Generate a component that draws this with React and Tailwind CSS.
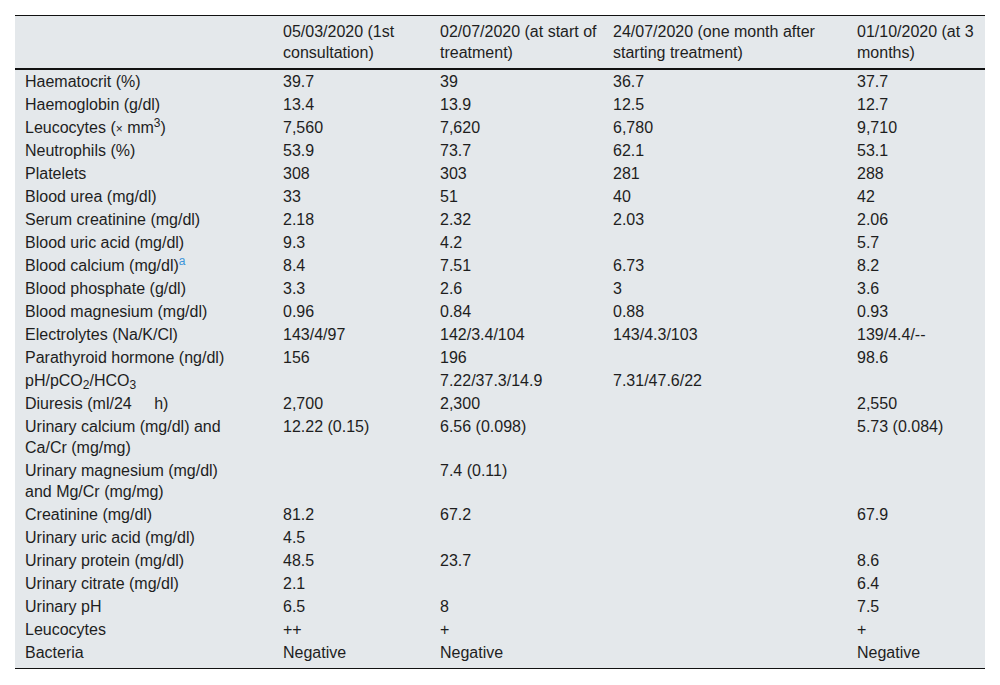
const headers = [
  '',
  '05/03/2020 (1st consultation)',
  '02/07/2020 (at start of treatment)',
  '24/07/2020 (one month after starting treatment)',
  '01/10/2020 (at 3 months)',
]

const rows = [
  ['Haematocrit (%)', '39.7', '39', '36.7', '37.7'],
  ['Haemoglobin (g/dl)', '13.4', '13.9', '12.5', '12.7'],
  [
    <>
      Leucocytes (<span className="text-[12px] leading-none">×</span> mm<sup>3</sup>)
    </>,
    '7,560',
    '7,620',
    '6,780',
    '9,710',
  ],
  ['Neutrophils (%)', '53.9', '73.7', '62.1', '53.1'],
  ['Platelets', '308', '303', '281', '288'],
  ['Blood urea (mg/dl)', '33', '51', '40', '42'],
  ['Serum creatinine (mg/dl)', '2.18', '2.32', '2.03', '2.06'],
  ['Blood uric acid (mg/dl)', '9.3', '4.2', '', '5.7'],
  [
    <>
      Blood calcium (mg/dl)<sup className="text-[#3d95da]">a</sup>
    </>,
    '8.4',
    '7.51',
    '6.73',
    '8.2',
  ],
  ['Blood phosphate (g/dl)', '3.3', '2.6', '3', '3.6'],
  ['Blood magnesium (mg/dl)', '0.96', '0.84', '0.88', '0.93'],
  ['Electrolytes (Na/K/Cl)', '143/4/97', '142/3.4/104', '143/4.3/103', '139/4.4/--'],
  ['Parathyroid hormone (ng/dl)', '156', '196', '', '98.6'],
  [
    <>
      pH/pCO<sub>2</sub>/HCO<sub>3</sub>
    </>,
    '',
    '7.22/37.3/14.9',
    '7.31/47.6/22',
    '',
  ],
  [
    <>
      Diuresis (ml/24
      <span className="inline-block w-[18px]" /> h)
    </>,
    '2,700',
    '2,300',
    '',
    '2,550',
  ],
  ['Urinary calcium (mg/dl) and Ca/Cr (mg/mg)', '12.22 (0.15)', '6.56 (0.098)', '', '5.73 (0.084)'],
  ['Urinary magnesium (mg/dl) and Mg/Cr (mg/mg)', '', '7.4 (0.11)', '', ''],
  ['Creatinine (mg/dl)', '81.2', '67.2', '', '67.9'],
  ['Urinary uric acid (mg/dl)', '4.5', '', '', ''],
  ['Urinary protein (mg/dl)', '48.5', '23.7', '', '8.6'],
  ['Urinary citrate (mg/dl)', '2.1', '', '', '6.4'],
  ['Urinary pH', '6.5', '8', '', '7.5'],
  ['Leucocytes', '++', '+', '', '+'],
  ['Bacteria', 'Negative', 'Negative', '', 'Negative'],
]

export default function App() {
  return (
    <div className="min-h-[685px] bg-white pt-[15px] px-[15px] font-['Liberation_Sans',Arial,sans-serif] text-[16px] leading-[21px] text-[#1e1e1e]">
      <table className="w-[970px] table-fixed border-collapse bg-[#e4e8eb]">
        <colgroup>
          <col className="w-[258px]" />
          <col className="w-[157px]" />
          <col className="w-[173px]" />
          <col className="w-[244px]" />
          <col className="w-[138px]" />
        </colgroup>
        <thead>
          <tr className="border-t border-[#111] border-b-2">
            {headers.map((h, i) => (
              <th key={i} className="pl-[10px] pr-[4px] py-[5px] text-left align-top font-normal">
                {h}
              </th>
            ))}
          </tr>
        </thead>
        <tbody className="border-b border-[#111]">
          {rows.map((r, i) => (
            <tr key={i}>
              {r.map((c, j) => (
                <td
                  key={j}
                  className={
                    (j === 0 ? 'pl-[10px] pr-[40px] ' : 'pl-[10px] pr-[4px] ') +
                    (i === rows.length - 1 ? 'pt-[1px] pb-[5px] align-top' : 'py-[1px] align-top')
                  }
                >
                  {c}
                </td>
              ))}
            </tr>
          ))}
        </tbody>
      </table>
    </div>
  )
}
